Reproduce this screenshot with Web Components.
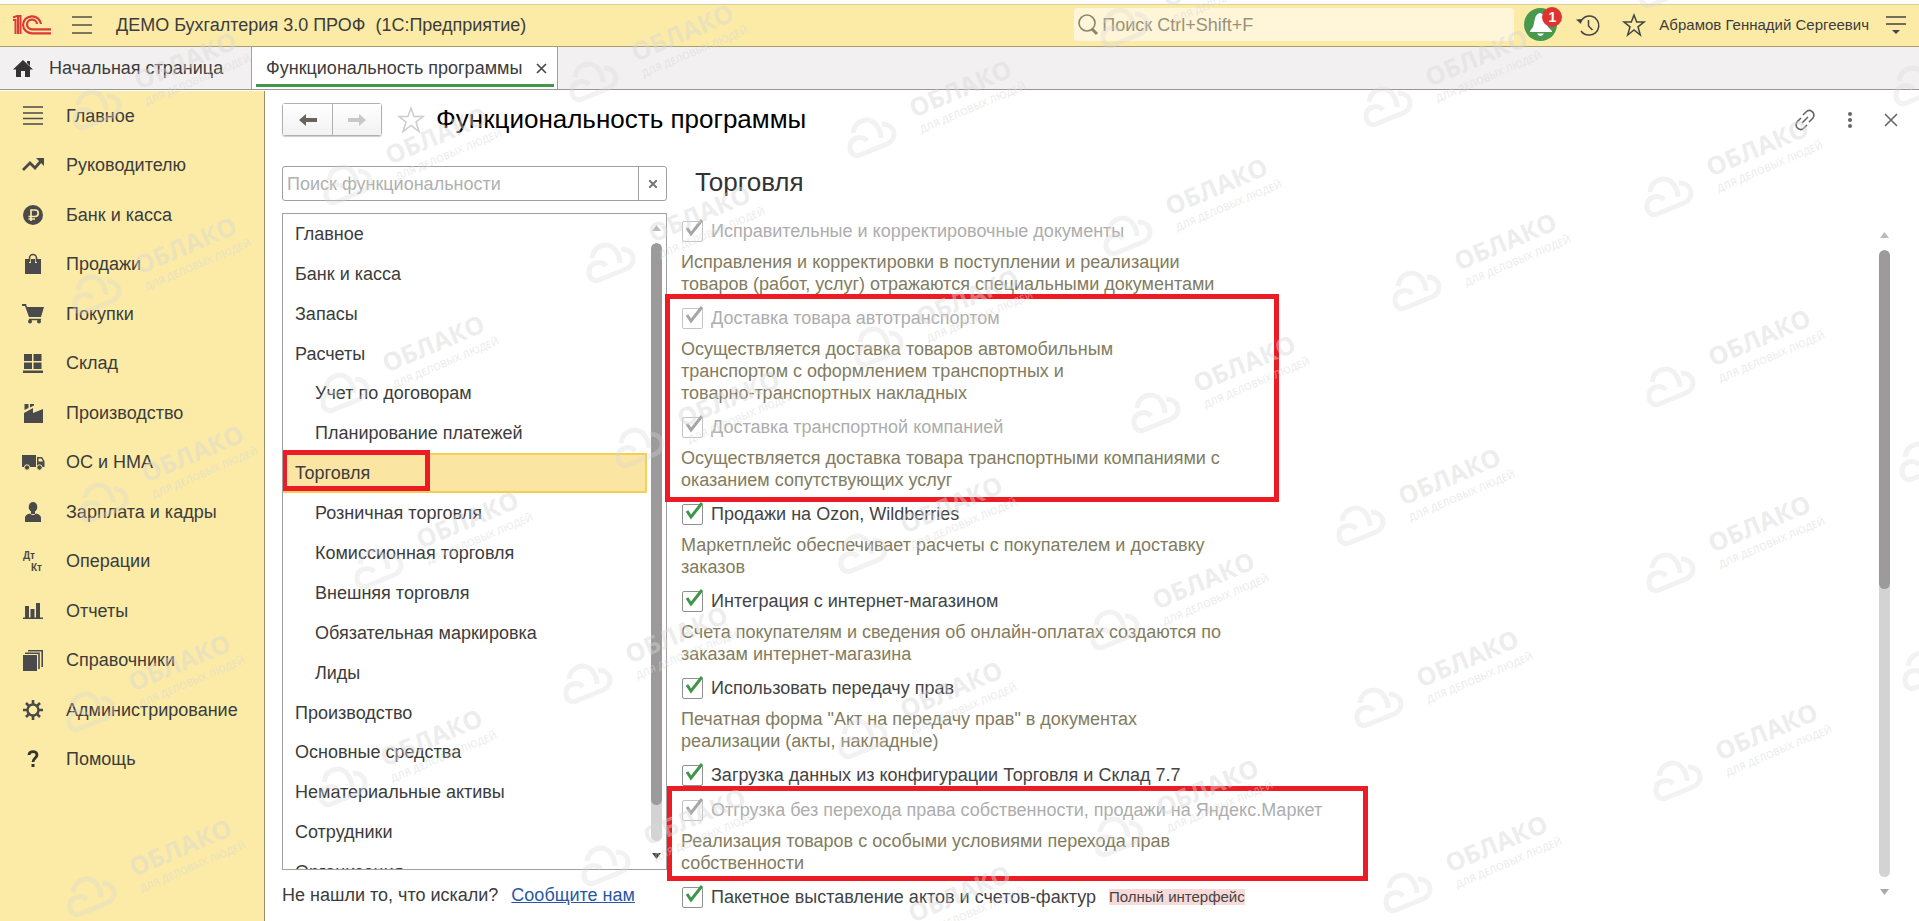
<!DOCTYPE html>
<html lang="ru">
<head>
<meta charset="utf-8">
<title>Функциональность программы</title>
<style>
  :root {
    --yellow: #fbeba6;
    --line: #a0a0a0;
    --ink: #3c3c3c;
    --icon: #4a4a4a;
    --green: #45964a;
    --red: #ed1c24;
  }
  html, body { height: 100%; margin: 0; }
  body {
    font: 18px/22px "Liberation Sans", Arial, sans-serif;
    color: var(--ink);
    background: #fff;
    overflow: hidden;
  }
</style>
</head>
<body>

<app-shell>
  <app-header slot="header" user="Абрамов Геннадий Сергеевич">ДЕМО Бухгалтерия 3.0 ПРОФ&nbsp; (1С:Предприятие)</app-header>
  <app-tabs slot="tabs"></app-tabs>

  <side-menu slot="side">
    <side-item icon="main">Главное</side-item>
    <side-item icon="trend">Руководителю</side-item>
    <side-item icon="ruble">Банк и касса</side-item>
    <side-item icon="bag">Продажи</side-item>
    <side-item icon="cart">Покупки</side-item>
    <side-item icon="store">Склад</side-item>
    <side-item icon="factory">Производство</side-item>
    <side-item icon="truck">ОС и НМА</side-item>
    <side-item icon="person">Зарплата и кадры</side-item>
    <side-item icon="dtkt">Операции</side-item>
    <side-item icon="chart">Отчеты</side-item>
    <side-item icon="books">Справочники</side-item>
    <side-item icon="gear">Администрирование</side-item>
    <side-item icon="help">Помощь</side-item>
  </side-menu>

  <form-page>
    <form-title slot="title">Функциональность программы</form-title>

    <section-search slot="left"></section-search>
    <section-list slot="left">
      <section-item>Главное</section-item>
      <section-item>Банк и касса</section-item>
      <section-item>Запасы</section-item>
      <section-item>Расчеты</section-item>
      <section-item nested>Учет по договорам</section-item>
      <section-item nested>Планирование платежей</section-item>
      <section-item selected>Торговля</section-item>
      <section-item nested>Розничная торговля</section-item>
      <section-item nested>Комиссионная торговля</section-item>
      <section-item nested>Внешняя торговля</section-item>
      <section-item nested>Обязательная маркировка</section-item>
      <section-item nested>Лиды</section-item>
      <section-item>Производство</section-item>
      <section-item>Основные средства</section-item>
      <section-item>Нематериальные активы</section-item>
      <section-item>Сотрудники</section-item>
      <section-item>Организация</section-item>
    </section-list>
    <feedback-line slot="left">Не нашли то, что искали?</feedback-line>

    <option-pane heading="Торговля">
      <option-item disabled label="Исправительные и корректировочные документы">Исправления и корректировки в поступлении и реализации<br>товаров (работ, услуг) отражаются специальными документами</option-item>
      <marked-block size="wide">
        <option-item disabled label="Доставка товара автотранспортом">Осуществляется доставка товаров автомобильным<br>транспортом с оформлением транспортных и<br>товарно-транспортных накладных</option-item>
        <option-item disabled label="Доставка транспортной компанией">Осуществляется доставка товара транспортными компаниями с<br>оказанием сопутствующих услуг</option-item>
      </marked-block>
      <option-item label="Продажи на Ozon, Wildberries">Маркетплейс обеспечивает расчеты с покупателем и доставку<br>заказов</option-item>
      <option-item label="Интеграция с интернет-магазином">Счета покупателям и сведения об онлайн-оплатах создаются по<br>заказам интернет-магазина</option-item>
      <option-item label="Использовать передачу прав">Печатная форма "Акт на передачу прав" в документах<br>реализации (акты, накладные)</option-item>
      <option-item label="Загрузка данных из конфигурации Торговля и Склад 7.7"></option-item>
      <marked-block size="widest">
        <option-item disabled label="Отгрузка без перехода права собственности, продажи на Яндекс.Маркет">Реализация товаров с особыми условиями перехода прав<br>собственности</option-item>
      </marked-block>
      <option-item label="Пакетное выставление актов и счетов-фактур" badge="Полный интерфейс"></option-item>
    </option-pane>
  </form-page>
</app-shell>

<water-marks></water-marks>

<script>
// attach an open shadow root and fill it
function define(name, render, setup) {
  customElements.define(name, class extends HTMLElement {
    constructor() {
      super();
      this.attachShadow({ mode: "open" });
    }
    connectedCallback() {
      this.shadowRoot.innerHTML = render(this);
      if (setup) setup(this);
    }
  });
}

const icons = {
  main: `<path d="M0 1h20M0 7h20M0 12.500h20M0 18h20" stroke="currentColor" stroke-width="1.500"/>`,
  trend: `<path d="M0 15l7-7 5 5 6-7" fill="none" stroke="currentColor" stroke-width="2.800"/><path d="M13 3h8v8z"/>`,
  ruble: `<circle cx="10" cy="10" r="10"/><path d="M8 16V5h4a3 3 0 010 6.500H5.500M5.500 14H12" fill="none" stroke="#fbeba6" stroke-width="1.700"/>`,
  bag: `<path d="M2 5h4v4h2V5h4v4h2V5h4v15H2z"/><path d="M6.500 8V4a3.500 3.500 0 017 0v4" fill="none" stroke="currentColor" stroke-width="1.600"/>`,
  cart: `<path d="M-1 0h4l1 3h17l-3 10H6L2 2h-3z"/><path d="M6 15.500h12" stroke="currentColor" stroke-width="1.500"/><circle cx="7" cy="17.500" r="2"/><circle cx="16" cy="17.500" r="2"/>`,
  store: `<path d="M1 1h8v7H1zM10.500 1h8v7h-8zM1 9.500h8V16H1zM10.500 9.500h8V16h-8zM0 17.500h20V20H0z"/>`,
  factory: `<path d="M1 20V10l9-5v5l10-4v14z"/><path d="M1.500 7V1h4v4zM7 4.500V1h4v1.500z"/>`,
  truck: `<path d="M-1 3h14v12H-1z"/><path d="M14 5h5l2.500 4v6H14z"/><path d="M15.500 6.500h3l1.500 3h-4.500z" fill="#fbeba6"/><circle cx="4" cy="15.500" r="2.700" stroke="#fbeba6"/><circle cx="16.500" cy="15.500" r="2.700" stroke="#fbeba6"/>`,
  person: `<ellipse cx="10" cy="5" rx="4.300" ry="5"/><path d="M8 9h4v3H8z"/><path d="M2 20v-4c0-3 3-4 5-4.500 2 2 4 2 6 0 2 .500 5 1.500 5 4.500v4z"/>`,
  dtkt: `<text x="0" y="8" font-size="10" font-weight="bold">Дт</text><text x="8" y="20" font-size="10" font-weight="bold">Кт</text>`,
  chart: `<path d="M2 5h4v12H2zM7.500 8h4v9h-4zM13 2h4v15h-4zM0 16.500h20V18H0z"/>`,
  books: `<path d="M0 5h14v16H0z"/><path d="M2 3.200h14V19M5 .800h14.200V17" fill="none" stroke="currentColor" stroke-width="1.600"/>`,
  gear: `<circle cx="10" cy="10" r="5.500" fill="none" stroke="currentColor" stroke-width="2.500"/><path d="M10 0v4M10 16v4M0 10h4M16 10h4M3 3l3 3M14 14l3 3M17 3l-3 3M6 14l-3 3" stroke="currentColor" stroke-width="2.600"/>`,
  help: `<path d="M6 6c0-4.500 8-4.500 8 0 0 3-4 3-4 7" fill="none" stroke="#333" stroke-width="2.800"/><path d="M8.500 15h3v3h-3z" fill="#333"/>`
};

define("app-shell", () => `
<style>
  :host { display: flex; flex-direction: column; height: 100vh; box-sizing: border-box; padding-top: 4px; }
  .body { display: flex; flex: 1; min-height: 0; margin-top: 1px; }
  main { flex: 1; min-width: 0; display: flex; }
</style>
<slot name="header"></slot>
<slot name="tabs"></slot>
<div class="body">
  <slot name="side"></slot>
  <main><slot></slot></main>
</div>`);

define("app-header", el => `
<style>
  :host {
    display: flex; align-items: center; height: 39px; flex: none;
    padding: 0 13px 2px; background: var(--yellow);
    border-top: 1px solid #dccf94; border-bottom: 1px solid #a89d6c;
  }
  svg { display: block; overflow: visible; }
  button { border: 0; padding: 0; background: none; color: inherit; font: inherit; }
  .logo { margin-right: 21px; }
  .title { margin-left: 24px; flex: 1; white-space: nowrap; }
  .search {
    display: flex; align-items: center; gap: 4px; width: 436px; height: 33px;
    padding-left: 4px; border-radius: 3px; background: #fff5d9; color: #8d8669;
  }
  input { flex: 1; min-width: 0; border: 0; padding: 0; background: none; font: inherit; outline: 0; }
  input::placeholder { color: #98927a; opacity: 1; }
  .bell { position: relative; margin-left: 10px; }
  .bell span {
    position: absolute; left: 18px; top: -1px; width: 20px; height: 20px; border-radius: 50%;
    background: #dd3431; color: #fff; font: bold 14px/20px "Liberation Sans", Arial, sans-serif; text-align: center;
  }
  .history { margin-left: 20px; }
  .star { margin-left: 24px; }
  .user { margin-left: 14px; font-size: 15px; white-space: nowrap; }
  .more { margin-left: 17px; }
</style>
<svg class="logo" width="38" height="20" fill="none" stroke="#dc3a35" stroke-width="2.200">
  <path d="M0 5h2.500v14M0 2.500L4 1h3.500v18M5 1v18" stroke-width="2"/>
  <path d="M28 9a9 8.500 0 10-9 9.300H38"/><path d="M24 9a5 4.800 0 10-5 5.300H38"/>
</svg>
<button aria-label="Меню"><svg width="20" height="18" stroke="#555044" stroke-width="1.600"><path d="M0 1h20M0 9h20M0 17h20"/></svg></button>
<div class="title"><slot></slot></div>
<label class="search">
  <svg width="20" height="22" fill="none" stroke="currentColor"><circle cx="9" cy="9" r="8" stroke-width="1.600"/><path d="M14 15l5 5" stroke-width="3"/></svg>
  <input type="text" placeholder="Поиск Ctrl+Shift+F" aria-label="Поиск">
</label>
<button class="bell" aria-label="Уведомления">
  <svg width="33" height="33"><circle cx="16.500" cy="16.500" r="16.500" fill="#48994d"/><path d="M16 5c-6 1-5 9-7 14l-3 4v1h22v-1l-4-4c-2-5-1-13-8-14zM13 25.500h7q-3.500 5-7 0z" fill="#fff"/></svg>
  <span>1</span>
</button>
<button class="history" aria-label="История"><svg width="22" height="22" fill="none" stroke="#444" stroke-width="1.500"><path d="M3.500 8A9.500 9.500 0 1112 21a9.500 9.500 0 01-8-4M11.500 6v6l4 4"/><path d="M-1 5.500l6-.500-1 5z" fill="#444" stroke="none"/></svg></button>
<button class="star" aria-label="Избранное"><svg width="22" height="22" fill="none" stroke="#444" stroke-width="1.500"><path d="M11 1l2.700 7H21l-6 4.800L17.300 21 11 16l-6.300 5L7 12.800 1 8h7.300z"/></svg></button>
<span class="user">${el.getAttribute("user")}</span>
<button class="more" aria-label="Сервис"><svg width="20" height="20"><path d="M0 2h20M0 9h20" stroke="#444" stroke-width="1.600"/><path d="M6 15h8l-4 4z" fill="#444"/></svg></button>`);

define("app-tabs", () => `
<style>
  :host { display: flex; height: 42px; flex: none; background: #f3f0f1; border-bottom: 1px solid #979797; }
  a { display: flex; align-items: center; box-sizing: border-box; color: inherit; text-decoration: none; white-space: nowrap; }
  .home { width: 251px; padding-left: 13px; gap: 16px; }
  .tab {
    position: relative; gap: 14px; padding: 0 10px 0 14px; background: #fff;
    border-left: 1px solid var(--line); border-right: 1px solid var(--line);
  }
  .tab::after { content: ""; position: absolute; left: 4px; right: 3px; bottom: 2px; height: 3px; background: var(--green); }
</style>
<a class="home" href="#home"><svg width="20" height="17" fill="#333"><path d="M10 0l10 9.500h-3V17h-5v-6H8v6H3V9.500H0zM14 1h3v5l-3-3z"/></svg>Начальная страница</a>
<a class="tab" href="#features">Функциональность программы<svg width="11" height="11" stroke="#444" stroke-width="1.600"><path d="M1 1l9 9M10 1l-9 9"/></svg></a>`);

define("side-menu", () => `
<style>
  :host { display: block; flex: none; width: 264px; background: var(--yellow); border-right: 1px solid #98906a; }
  nav { display: grid; grid-auto-rows: 1fr; height: 693px; }
</style>
<nav><slot></slot></nav>`);

define("side-item", el => `
<style>
  :host { display: block; }
  a { display: flex; align-items: center; gap: 23px; height: 100%; padding-left: 23px; color: inherit; text-decoration: none; }
  svg { overflow: visible; color: var(--icon); }
</style>
<a href="#${el.getAttribute("icon")}"><svg width="20" height="20" fill="currentColor">${icons[el.getAttribute("icon")]}</svg><slot></slot></a>`);

define("form-page", () => `
<style>
  :host { flex: 1; min-width: 0; display: flex; flex-direction: column; padding: 12px 0 0 17px; }
  .cols { flex: 1; min-height: 0; display: grid; grid-template-columns: 385px minmax(0, 1fr); gap: 14px; margin-top: 30px; }
  .left { display: flex; flex-direction: column; min-height: 0; }
  .right { min-height: 0; display: flex; }
</style>
<slot name="title"></slot>
<div class="cols">
  <div class="left"><slot name="left"></slot></div>
  <div class="right"><slot></slot></div>
</div>`);

define("form-title", () => `
<style>
  :host { display: flex; align-items: center; height: 33px; padding-right: 21px; }
  svg { display: block; overflow: visible; }
  button { border: 0; padding: 0; background: none; }
  .nav { display: flex; border: 1px solid #b0b0b0; border-radius: 3px; box-shadow: 0 1px 1px #ccc; }
  .nav button { width: 49px; height: 31px; display: grid; place-items: center; background: linear-gradient(#fff, #f2f2f2); }
  .nav button + button { border-left: 1px solid #b0b0b0; }
  .star { margin: 0 12px 0 16px; }
  h1 { margin: 0; padding-bottom: 2px; flex: 1; font-size: 26px; line-height: 30px; font-weight: normal; color: #000; }
  .tools { display: flex; align-items: center; gap: 32px; }
</style>
<div class="nav">
  <button aria-label="Назад"><svg width="18" height="14"><path d="M0 7l7-6v4h11v4H7v4z" fill="#66645c"/></svg></button>
  <button aria-label="Вперед" disabled><svg width="18" height="14"><path d="M18 7l-7-6v4H0v4h11v4z" fill="#c8c8c8"/></svg></button>
</div>
<button class="star" aria-label="В избранное"><svg width="26" height="26" fill="none" stroke="#ccc" stroke-width="1.500"><path d="M13 1l3 8.500h9l-7 5.500 3 9.500-8-6-8 6 3-9.500-7-5.500h9z"/></svg></button>
<h1><slot></slot></h1>
<div class="tools">
  <button aria-label="Ссылка"><svg width="22" height="22" fill="none" stroke="#666" stroke-width="1.600"><path d="M9 6l3-3c4-4 10 1 7 6l-4 4M13 16l-3 3c-4 4-10-1-7-6l4-4M8 14l6-6"/></svg></button>
  <button aria-label="Еще"><svg width="4" height="16" fill="#666"><circle cx="2" cy="2" r="2"/><circle cx="2" cy="8" r="2"/><circle cx="2" cy="14" r="2"/></svg></button>
  <button aria-label="Закрыть"><svg width="14" height="14" stroke="#666" stroke-width="1.600"><path d="M1 1l12 12M13 1L1 13"/></svg></button>
</div>`);

define("section-search", () => `
<style>
  :host { display: flex; height: 33px; flex: none; border: 1px solid var(--line); border-radius: 3px; }
  input { flex: 1; min-width: 0; border: 0; padding: 0 4px; background: none; font: inherit; outline: 0; }
  input::placeholder { color: #b0b0b0; opacity: 1; }
  button { width: 28px; padding: 0; border: 0; border-left: 1px solid var(--line); background: none; display: grid; place-items: center; }
</style>
<input type="text" placeholder="Поиск функциональности" aria-label="Поиск функциональности">
<button aria-label="Очистить"><svg width="8" height="8" stroke="#777" stroke-width="2"><path d="M0 0l8 8M8 0L0 8"/></svg></button>`);

define("section-list", () => `
<style>
  :host {
    display: flex; gap: 4px; flex: 1; min-height: 0; margin-top: 12px; overflow: hidden;
    border: 1px solid var(--line); padding-right: 4px;
  }
  .rows { flex: 1; display: grid; grid-auto-rows: 1fr; height: 678px; }
  scroll-bar { margin: 11px 0 10px; }
</style>
<div class="rows" role="listbox"><slot></slot></div>
<scroll-bar part="562" total="597" end></scroll-bar>`);

define("section-item", () => `
<style>
  :host { position: relative; display: flex; align-items: center; padding-left: 12px; box-sizing: border-box; }
  :host([nested]) { padding-left: 32px; }
  :host([selected]) { background: #fbe5a3; border: 2px solid #f4cf58; padding-left: 10px; }
  .frame { display: none; }
  :host([selected]) .frame {
    display: block; position: absolute; left: -3px; top: -5px; width: 148px; height: 41px;
    box-sizing: border-box; border: 5px solid var(--red);
  }
</style>
<slot></slot><span class="frame"></span>`,
el => el.setAttribute("role", "option"));

define("feedback-line", () => `
<style>
  :host { display: flex; gap: 13px; padding: 14px 0 15px; white-space: nowrap; }
  a { color: #2a57a5; }
</style>
<slot></slot><a href="#feedback">Сообщите нам</a>`);

// part / total give the share of the track the thumb takes
define("scroll-bar", el => `
<style>
  :host { display: flex; flex-direction: column; align-items: center; justify-content: space-between; width: 11px; flex: none; }
  .track { flex: 1; width: 100%; margin: 12px 0; border-radius: 6px; background: #d4d3d3; overflow: hidden; }
  .thumb { height: ${Math.round(el.getAttribute("part") / el.getAttribute("total") * 100)}%; border-radius: 6px; background: #9c9a9b; }
  svg { display: block; }
</style>
<svg width="9" height="6"><path d="M0 6h9L4.500 0z" fill="#bbb"/></svg>
<div class="track"><div class="thumb"></div></div>
<svg width="9" height="6"><path d="M0 0h9L4.500 6z" fill="${el.hasAttribute("end") ? "#444" : "#aaa"}"/></svg>`);

define("option-pane", el => `
<style>
  :host { flex: 1; min-width: 0; display: flex; flex-direction: column; }
  h2 { margin: 0 0 21px 14px; font-size: 26px; line-height: 32px; font-weight: normal; color: #333; }
  .row { flex: 1; min-height: 0; display: flex; }
  .items { flex: 1; min-width: 0; }
  scroll-bar { margin: 13px 29px 26px 0; }
</style>
<h2>${el.getAttribute("heading")}</h2>
<div class="row">
  <div class="items"><slot></slot></div>
  <scroll-bar part="338" total="624"></scroll-bar>
</div>`);

define("option-item", el => {
  const off = el.hasAttribute("disabled");
  const badge = el.getAttribute("badge");
  return `
<style>
  :host { display: block; padding-bottom: 11px; white-space: nowrap; }
  label { display: flex; align-items: center; height: 24px; color: ${off ? "#adadad" : "#444"}; }
  .box { position: relative; width: 20px; height: 20px; margin: 0 9px 0 1px; }
  input {
    appearance: none; display: block; width: 21px; height: 21px; margin: 0; box-sizing: border-box;
    border: 1px solid ${off ? "#c4c4c4" : "#909090"}; border-radius: 2px; background: #fff;
  }
  svg { position: absolute; left: 3px; top: -2px; overflow: visible; pointer-events: none; }
  .text { margin-top: 8px; color: #827c60; }
  .badge { margin-left: 13px; font-size: 15px; line-height: 16px; background: #f8dad9; color: #444; }
</style>
<label>
  <span class="box">
    <input type="checkbox" checked ${off ? "disabled" : ""}>
    <svg width="19" height="18"><path d="M2 9l4 6L17 1" fill="none" stroke="${off ? "#a6a6a6" : "#3f9648"}" stroke-width="3"/></svg>
  </span>
  ${el.getAttribute("label")}
  ${badge ? `<span class="badge">${badge}</span>` : ""}
</label>
${el.childNodes.length ? `<div class="text"><slot></slot></div>` : ""}`;
});

define("marked-block", () => `
<style>
  :host { display: block; position: relative; }
  .frame {
    position: absolute; box-sizing: border-box; border: 5px solid var(--red); pointer-events: none;
    left: -16px; top: -12px; bottom: 0; width: 614px;
  }
  :host([size="widest"]) .frame { left: -14px; bottom: 4px; width: 701px; }
</style>
<slot></slot><div class="frame"></div>`);

// centres of the clouds
const marks = [
  [97, 110], [594, 82], [1125, 28], [1388, 107], [1663, -12], [1918, 86],
  [348, 185], [872, 138], [1128, 236], [1417, 291], [1669, 197],
  [97, 295], [345, 393], [611, 263], [640, 448], [879, 347], [1156, 413], [1671, 387], [1924, 462],
  [104, 503], [379, 569], [588, 684], [863, 554], [1115, 630], [1361, 526], [1671, 573], [1927, 671],
  [91, 712], [92, 897], [343, 787], [606, 866], [863, 739], [1119, 837], [1379, 708], [1678, 781],
  [1408, 893], [871, 943]
];

// clouds at the top and right edges have no caption in view
const caption = (x, y) => y < 0 || x > 1900 ? "" : `
    <g transform="translate(42 -20) rotate(-23)">
      <text class="big" x="0" y="0">ОБЛАКО</text>
      <text class="small" x="1" y="17">ДЛЯ ДЕЛОВЫХ ЛЮДЕЙ</text>
    </g>`;

define("water-marks", () => `
<style>
  :host { position: absolute; inset: 0; overflow: hidden; pointer-events: none; }
  svg { display: block; width: 100%; height: 100%; }
  text { font-family: "Open Sans", sans-serif; fill: #d8d8d8; fill-opacity: .45; }
  .big { font-size: 25px; font-weight: 700; }
  .small { font-size: 10px; font-weight: 600; }
  path { fill: none; stroke: #d8d8d8; stroke-opacity: .32; stroke-width: 5; }
</style>
<svg aria-hidden="true">${marks.map(([x, y]) => `
  <g transform="translate(${x} ${y})">
    <path d="M-5 3C-9-3-22-1-22 9c0 7 5 10 10 8L15 6C26 1 24-14 10-14"/>
    <path d="M-19-5C-17-19-1-22 5-12c3 4 4 8 4 12" stroke-width="4"/>${caption(x, y)}
  </g>`).join("")}
</svg>`);
</script>
</body>
</html>
